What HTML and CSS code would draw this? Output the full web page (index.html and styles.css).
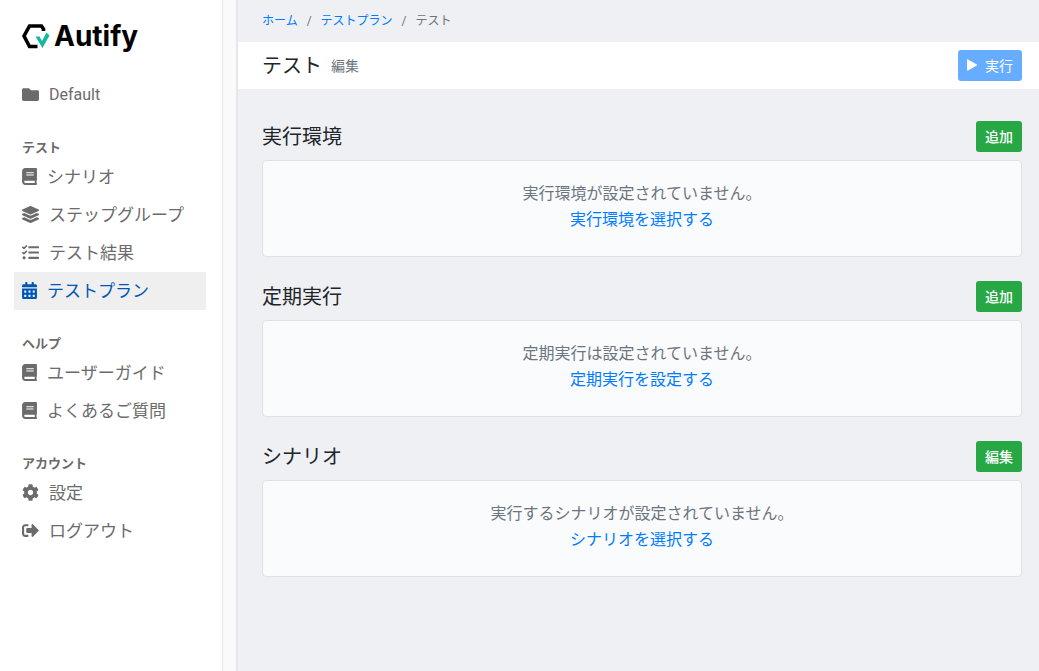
FILE: index.html
```html
<!DOCTYPE html>
<html lang="ja">
<head>
<meta charset="UTF-8">
<meta name="viewport" content="width=device-width, initial-scale=1.0">
<title>テスト - Autify</title>
<link rel="stylesheet" href="styles.css">
</head>
<body>

<svg class="sprite" aria-hidden="true">
    <symbol id="icon-folder" viewBox="0 0 512 512"><path d="M464 128H272l-64-64H48C21.49 64 0 85.49 0 112v288c0 26.51 21.49 48 48 48h416c26.51 0 48-21.49 48-48V176c0-26.51-21.49-48-48-48z"/></symbol>
    <symbol id="icon-book" viewBox="0 0 448 512"><path d="M448 360V24c0-13.3-10.7-24-24-24H96C43 0 0 43 0 96v320c0 53 43 96 96 96h328c13.3 0 24-10.7 24-24v-16c0-7.5-3.5-14.3-8.9-18.7-4.2-15.4-4.2-59.3 0-74.7 5.4-4.3 8.9-11.1 8.9-18.6zM128 134c0-3.3 2.7-6 6-6h212c3.3 0 6 2.7 6 6v20c0 3.3-2.7 6-6 6H134c-3.3 0-6-2.7-6-6v-20zm0 64c0-3.3 2.7-6 6-6h212c3.3 0 6 2.7 6 6v20c0 3.3-2.7 6-6 6H134c-3.3 0-6-2.7-6-6v-20zm253.4 250H96c-17.7 0-32-14.3-32-32 0-17.6 14.4-32 32-32h285.4c-1.9 17.1-1.9 46.9 0 64z"/></symbol>
    <symbol id="icon-layers" viewBox="0 0 512 512"><path d="M12.41 148.02l232.94 105.67c6.8 3.09 14.49 3.09 21.29 0l232.94-105.67c16.55-7.51 16.55-32.52 0-40.03L266.65 2.31a25.607 25.607 0 0 0-21.29 0L12.41 107.98c-16.55 7.51-16.55 32.53 0 40.04zm487.18 88.28l-58.09-26.33-161.64 73.27c-7.56 3.43-15.59 5.17-23.86 5.17s-16.29-1.74-23.86-5.17L70.51 209.97l-58.1 26.33c-16.55 7.5-16.55 32.5 0 40l232.94 105.59c6.8 3.08 14.49 3.08 21.29 0L499.59 276.3c16.55-7.5 16.55-32.5 0-40zm0 127.8l-57.87-26.23-161.86 73.37c-7.56 3.43-15.59 5.17-23.86 5.17s-16.29-1.74-23.86-5.17L70.29 337.87 12.41 364.1c-16.55 7.5-16.55 32.5 0 40l232.94 105.59c6.8 3.08 14.49 3.08 21.29 0L499.59 404.1c16.55-7.5 16.55-32.5 0-40z"/></symbol>
    <symbol id="icon-tasks" viewBox="0 0 512 512"><path d="M139.61 35.5a12 12 0 0 0-17 0L58.93 98.81l-22.7-22.12a12 12 0 0 0-17 0L3.53 92.41a12 12 0 0 0 0 17l47.59 47.4a12.78 12.78 0 0 0 17.61 0l15.59-15.62L156.52 69a12.09 12.09 0 0 0 .09-17zm0 159.19a12 12 0 0 0-17 0l-63.68 63.72-22.7-22.1a12 12 0 0 0-17 0L3.53 252a12 12 0 0 0 0 17L51 316.5a12.77 12.77 0 0 0 17.6 0l15.7-15.69 72.2-72.22a12 12 0 0 0 .09-16.9zM64 368c-26.49 0-48.59 21.5-48.59 48S37.53 464 64 464a48 48 0 0 0 0-96zm432 16H208a16 16 0 0 0-16 16v32a16 16 0 0 0 16 16h288a16 16 0 0 0 16-16v-32a16 16 0 0 0-16-16zm0-320H208a16 16 0 0 0-16 16v32a16 16 0 0 0 16 16h288a16 16 0 0 0 16-16V80a16 16 0 0 0-16-16zm0 160H208a16 16 0 0 0-16 16v32a16 16 0 0 0 16 16h288a16 16 0 0 0 16-16v-32a16 16 0 0 0-16-16z"/></symbol>
    <symbol id="icon-calendar" viewBox="0 0 448 512"><path d="M0 464c0 26.5 21.5 48 48 48h352c26.5 0 48-21.5 48-48V192H0v272zm320-196c0-6.6 5.4-12 12-12h40c6.6 0 12 5.4 12 12v40c0 6.6-5.4 12-12 12h-40c-6.6 0-12-5.4-12-12v-40zm0 128c0-6.6 5.4-12 12-12h40c6.6 0 12 5.4 12 12v40c0 6.6-5.4 12-12 12h-40c-6.6 0-12-5.4-12-12v-40zM192 268c0-6.6 5.4-12 12-12h40c6.6 0 12 5.4 12 12v40c0 6.6-5.4 12-12 12h-40c-6.6 0-12-5.4-12-12v-40zm0 128c0-6.6 5.4-12 12-12h40c6.6 0 12 5.4 12 12v40c0 6.6-5.4 12-12 12h-40c-6.6 0-12-5.4-12-12v-40zM64 268c0-6.6 5.4-12 12-12h40c6.6 0 12 5.4 12 12v40c0 6.6-5.4 12-12 12H76c-6.6 0-12-5.4-12-12v-40zm0 128c0-6.6 5.4-12 12-12h40c6.6 0 12 5.4 12 12v40c0 6.6-5.4 12-12 12H76c-6.6 0-12-5.4-12-12v-40zM400 64h-48V16c0-8.8-7.2-16-16-16h-32c-8.8 0-16 7.2-16 16v48H160V16c0-8.8-7.2-16-16-16h-32c-8.8 0-16 7.2-16 16v48H48C21.5 64 0 85.5 0 112v48h448v-48c0-26.5-21.5-48-48-48z"/></symbol>
    <symbol id="icon-cog" viewBox="0 0 512 512"><path d="M487.4 315.7l-42.6-24.6c4.3-23.2 4.3-47 0-70.2l42.6-24.6c4.9-2.8 7.1-8.6 5.5-14-11.1-35.6-30-67.8-54.7-94.6-3.8-4.1-10-5.1-14.8-2.3L380.8 110c-17.9-15.4-38.5-27.3-60.8-35.1V25.8c0-5.6-3.9-10.5-9.4-11.7-36.7-8.2-74.3-7.8-109.2 0-5.5 1.2-9.4 6.1-9.4 11.7V75c-22.2 7.9-42.8 19.8-60.8 35.1L88.7 85.5c-4.9-2.8-11-1.9-14.8 2.3-24.7 26.7-43.6 58.9-54.7 94.6-1.7 5.4.6 11.2 5.5 14L67.3 221c-4.3 23.2-4.3 47 0 70.2l-42.6 24.6c-4.9 2.8-7.1 8.6-5.5 14 11.1 35.6 30 67.8 54.7 94.6 3.8 4.1 10 5.1 14.8 2.3l42.6-24.6c17.9 15.4 38.5 27.3 60.8 35.1v49.2c0 5.6 3.9 10.5 9.4 11.7 36.7 8.2 74.3 7.8 109.2 0 5.5-1.2 9.4-6.1 9.4-11.7v-49.2c22.2-7.9 42.8-19.8 60.8-35.1l42.6 24.6c4.9 2.8 11 1.9 14.8-2.3 24.7-26.7 43.6-58.9 54.7-94.6 1.5-5.5-.7-11.3-5.6-14.1zM256 336c-44.1 0-80-35.9-80-80s35.9-80 80-80 80 35.9 80 80-35.9 80-80 80z"/></symbol>
    <symbol id="icon-logout" viewBox="0 0 512 512"><path d="M497 273L329 441c-15 15-41 4.5-41-17v-96H152c-13.3 0-24-10.7-24-24v-96c0-13.3 10.7-24 24-24h136V88c0-21.4 25.9-32 41-17l168 168c9.3 9.4 9.3 24.6 0 34zM192 436v-40c0-6.6-5.4-12-12-12H96c-17.7 0-32-14.3-32-32V160c0-17.7 14.3-32 32-32h84c6.6 0 12-5.4 12-12V76c0-6.6-5.4-12-12-12H96c-53 0-96 43-96 96v192c0 53 43 96 96 96h84c6.6 0 12-5.4 12-12z"/></symbol>
</svg>

<div class="layout">
    <aside class="sidebar">
        <a class="logo" href="#">
            <svg class="logo-mark" viewBox="0 0 28 28" aria-hidden="true">
                <path d="M21.500 9V7L19.500 4H7.500L2 14l5.500 10.500H15.500" fill="none" stroke="#000" stroke-width="3.6"/>
                <path d="M13.500 14.500h4l2.500 4.500 4.500-8.500 3 3L20.500 26z" fill="#14b8a0"/>
            </svg>
            <span>Autify</span>
        </a>
        <nav class="menu">
            <a class="menu-item" href="#"><svg class="icon"><use href="#icon-folder"/></svg><span class="project-name">Default</span></a>

            <h2 class="menu-title">テスト</h2>
            <a class="menu-item" href="#"><svg class="icon icon-narrow"><use href="#icon-book"/></svg>シナリオ</a>
            <a class="menu-item" href="#"><svg class="icon"><use href="#icon-layers"/></svg>ステップグループ</a>
            <a class="menu-item" href="#"><svg class="icon"><use href="#icon-tasks"/></svg>テスト結果</a>
            <a class="menu-item active" href="#"><svg class="icon icon-narrow"><use href="#icon-calendar"/></svg>テストプラン</a>

            <h2 class="menu-title">ヘルプ</h2>
            <a class="menu-item" href="#"><svg class="icon icon-narrow"><use href="#icon-book"/></svg>ユーザーガイド</a>
            <a class="menu-item" href="#"><svg class="icon icon-narrow"><use href="#icon-book"/></svg>よくあるご質問</a>

            <h2 class="menu-title">アカウント</h2>
            <a class="menu-item" href="#"><svg class="icon"><use href="#icon-cog"/></svg>設定</a>
            <a class="menu-item" href="#"><svg class="icon"><use href="#icon-logout"/></svg>ログアウト</a>
        </nav>
    </aside>
    <div class="gutter"></div>

    <main class="main">
        <nav class="breadcrumb">
            <a href="#">ホーム</a>
            <span>/</span>
            <a href="#">テストプラン</a>
            <span>/</span>
            <span>テスト</span>
        </nav>
        <header class="page-header">
            <h1>テスト</h1>
            <a class="edit-link" href="#">編集</a>
            <button class="btn btn-run" type="button" disabled>
                <svg class="play" viewBox="0 0 10 12" aria-hidden="true"><path d="M0 1Q0 0 1 .4L9.500 5.300Q10.400 6 9.500 6.700L1 11.600Q0 12 0 11z"/></svg>
                <span>実行</span>
            </button>
        </header>

        <div class="content">
            <section>
                <div class="section-header">
                    <h2>実行環境</h2>
                    <button class="btn btn-green" type="button">追加</button>
                </div>
                <div class="card">
                    <p>実行環境が設定されていません。</p>
                    <a href="#">実行環境を選択する</a>
                </div>
            </section>
            <section>
                <div class="section-header">
                    <h2>定期実行</h2>
                    <button class="btn btn-green" type="button">追加</button>
                </div>
                <div class="card">
                    <p>定期実行は設定されていません。</p>
                    <a href="#">定期実行を設定する</a>
                </div>
            </section>
            <section>
                <div class="section-header">
                    <h2>シナリオ</h2>
                    <button class="btn btn-green" type="button">編集</button>
                </div>
                <div class="card">
                    <p>実行するシナリオが設定されていません。</p>
                    <a href="#">シナリオを選択する</a>
                </div>
            </section>
        </div>
    </main>
</div>

</body>
</html>
```
FILE: styles.css
```css
* {
    box-sizing: border-box;
}
body {
    margin: 0;
    font-family: Roboto, "Noto Sans CJK JP", sans-serif;
    font-size: 16px;
    line-height: 26px;
    color: #212529;
    background-color: #eff0f4;
}
a {
    color: #007bff;
    text-decoration: none;
}
h1, h2, p {
    margin: 0;
    font-weight: normal;
}
.sprite {
    display: none;
}
.layout {
    display: flex;
    min-height: 100vh;
}

/* Sidebar */
.sidebar {
    width: 222px;
    flex-shrink: 0;
    padding: 20px 16px 20px 14px;
    background-color: #fff;
}
.gutter {
    width: 16px;
    flex-shrink: 0;
    background-color: #fafafa;
    border-left: 1px solid #e8e8e8;
    border-right: 2px solid #e6e7ea;
}
.logo {
    display: flex;
    align-items: center;
    gap: 4px;
    height: 32px;
    margin-bottom: 24px;
    padding-left: 8px;
    font-family: Inter, sans-serif;
    font-size: 28px;
    font-weight: bold;
    color: #000;
}
.logo-mark {
    width: 28px;
    height: 28px;
}
.menu-title {
    margin-top: 24px;
    padding-left: 8px;
    font-size: 13px;
    font-weight: bold;
    line-height: 20px;
    color: #6b6b6b;
}
.menu-item {
    display: flex;
    align-items: center;
    gap: 10px;
    height: 38px;
    padding: 0 8px 1px;
    font-size: 17px;
    color: #6b6b6b;
}
.menu-item.active {
    color: #0056b3;
    background-color: #efefef;
}
.project-name {
    font-size: 16px;
}
.icon {
    width: 17px;
    height: 17px;
    fill: currentColor;
}
.icon-narrow {
    width: 15px;
}

/* Main column */
.main {
    flex: 1;
}
.breadcrumb {
    display: flex;
    align-items: center;
    gap: 9px;
    height: 42px;
    padding: 0 24px;
    font-size: 12px;
    color: #6c757d;
}
.page-header {
    display: flex;
    align-items: center;
    gap: 9px;
    height: 47px;
    padding: 0 17px 0 24px;
    background-color: #fff;
}
h1, .section-header h2 {
    font-size: 20px;
}
.edit-link {
    font-size: 14px;
    color: #6c757d;
}
.btn {
    height: 31px;
    padding: 0 9px 2px;
    border: 0;
    border-radius: 3px;
    font-family: inherit;
    font-size: 14px;
    color: #fff;
}
.btn-run {
    display: flex;
    align-items: center;
    gap: 8px;
    margin-left: auto;
    background-color: #66acff;
}
.play {
    width: 10px;
    height: 12px;
    fill: currentColor;
}
.btn-green {
    font-weight: 500;
    background-color: #28a745;
}
.content {
    display: flex;
    flex-direction: column;
    gap: 24px;
    padding: 32px 17px 32px 24px;
}
.section-header {
    display: flex;
    align-items: center;
    justify-content: space-between;
    margin-bottom: 8px;
}
.card {
    padding: 20px 20px 23px;
    border: 1px solid #dfe1e6;
    border-radius: 4px;
    text-align: center;
    color: #6c757d;
    background-color: #fafbfd;
}
```
